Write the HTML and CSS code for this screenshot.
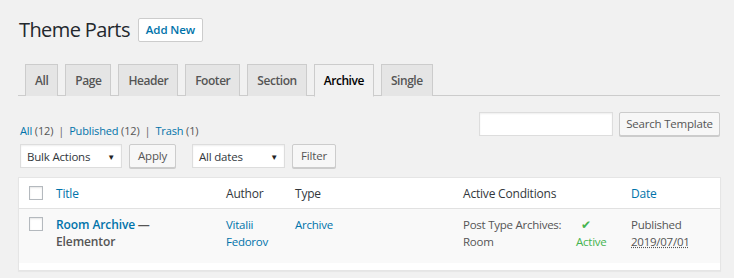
FILE: index.html
```html
<!DOCTYPE html>
<html>
<head>
<meta charset="utf-8">
<link rel="stylesheet" href="styles.css">
</head>
<body>
<div class="wrap">
  <div class="heading">
    <h1 class="title">Theme Parts</h1>
    <a class="add-new">Add New</a>
  </div>
  <nav class="tabs">
    <a class="tab">All</a>
    <a class="tab">Page</a>
    <a class="tab">Header</a>
    <a class="tab">Footer</a>
    <a class="tab">Section</a>
    <a class="tab active">Archive</a>
    <a class="tab">Single</a>
  </nav>
  <div class="filters">
    <div class="left">
      <ul class="subsub">
        <li><a>All <span class="count">(12)</span></a></li>
        <li class="sep">|</li>
        <li><a>Published <span class="count">(12)</span></a></li>
        <li class="sep">|</li>
        <li><a>Trash <span class="count">(1)</span></a></li>
      </ul>
      <div class="actions">
        <div class="select bulk">Bulk Actions<span class="arrow">▼</span></div>
        <button class="btn apply">Apply</button>
        <div class="select dates">All dates<span class="arrow">▼</span></div>
        <button class="btn filter">Filter</button>
      </div>
    </div>
    <div class="search">
      <div class="search-input"></div>
      <button class="btn search-btn">Search Template</button>
    </div>
  </div>
  <div class="table">
    <div class="row head">
      <div class="c-cb"><span class="cb"></span></div>
      <div class="c-title"><a>Title</a></div>
      <div class="c-author">Author</div>
      <div class="c-type">Type</div>
      <div class="c-cond">Active Conditions</div>
      <div class="c-active"></div>
      <div class="c-date"><a>Date</a></div>
    </div>
    <div class="row body">
      <div class="c-cb"><span class="cb"></span></div>
      <div class="c-title"><a class="strong">Room Archive</a> <strong class="dash">—<br>Elementor</strong></div>
      <div class="c-author"><a>Vitalii<br>Fedorov</a></div>
      <div class="c-type"><a>Archive</a></div>
      <div class="c-cond">Post Type Archives:<br>Room</div>
      <div class="c-active"><span class="check">✔</span><span class="active-label">Active</span></div>
      <div class="c-date">Published<br><abbr>2019/07/01</abbr></div>
    </div>
  </div>
</div>
</body>
</html>
```
FILE: styles.css
```css
* { box-sizing: border-box; }
html, body { margin: 0; padding: 0; }
body {
  background: #f1f1f1;
  font-family: "Open Sans", "Noto Sans", sans-serif;
  font-size: 12px;
  color: #444;
  width: 734px;
  height: 278px;
  overflow: hidden;
}
a { color: #0073aa; text-decoration: none; }
.wrap { padding: 16px 14px 0 18px; }
.heading { display: flex; align-items: center; gap: 8px; height: 27px; }
.title { margin: 0; font-size: 20px; font-weight: 400; color: #23282d; line-height: 27px; padding-left: 1px; letter-spacing: -0.6px; }
.add-new {
  border: 1px solid #ccc; border-radius: 2px;
  height: 24px; padding: 0 7px; line-height: 22px; font-size: 11.5px; font-weight: 600;
  background: #fff; letter-spacing: -0.1px;
}
.tabs {
  margin-top: 21px; display: flex; gap: 7px; padding-left: 7px;
  border-bottom: 1px solid #ccc; height: 32px;
}
.tab {
  height: 32px; border: 1px solid #ccc; border-bottom: none; background: #e5e5e5;
  color: #555; font-weight: 600; font-size: 12px; letter-spacing: -0.45px; padding: 0 9px; line-height: 31px;
}
.tab.active { background: #f1f1f1; color: #000; height: 33px; border-bottom: 1px solid #f1f1f1; }
.filters { display: flex; justify-content: space-between; margin-top: 16px; }
.left { display: flex; flex-direction: column; }
.subsub { list-style: none; margin: 12px 0 0 2px; padding: 0; display: flex; gap: 5px; font-size: 11px; color: #666; line-height: 14px; letter-spacing: -0.15px; }
.subsub .count { color: #555; }
.subsub .sep { color: #666; }
.actions { display: flex; align-items: center; margin-top: 6px; }
.select {
  background: #fff; border: 1px solid #ddd; height: 24px; display: flex; align-items: center;
  justify-content: space-between; padding: 0 6px 0 6px; color: #32373c; font-size: 11.5px; letter-spacing: -0.2px;
  box-shadow: inset 0 1px 2px rgba(0,0,0,.07);
}
.select .arrow { font-size: 8px; color: #222; }
.bulk { width: 102px; margin-left: 2px; }
.dates { width: 93px; margin-left: 16px; }
.btn {
  font-family: inherit; font-size: 11.5px; color: #555; background: #f7f7f7; letter-spacing: -0.2px;
  border: 1px solid #ccc; border-radius: 2px; box-shadow: 0 1px 0 #ccc;
  height: 24px; padding: 0 7px; margin-left: 7px; line-height: 22px;
}
.apply { width: 47px; padding: 0; }
.filter { width: 44px; padding: 0; }
.search { display: flex; align-items: flex-start; gap: 6px; }
.search-input { width: 134px; height: 24px; background: #fff; border: 1px solid #ddd; box-shadow: inset 0 1px 2px rgba(0,0,0,.07); }
.search-btn { margin-left: 0; width: 101px; padding: 0; }
.table {
  margin-top: 9px; background: #fff; border: 1px solid #e5e5e5; box-shadow: 0 1px 1px rgba(0,0,0,.04);
  width: 703px; padding-bottom: 7px;
}
.row { display: flex; }
.row.head { height: 31px; align-items: center; border-bottom: 1px solid #e1e1e1; color: #32373c; font-size: 12px; letter-spacing: -0.2px; }
.row.body { background: #f9f9f9; padding: 7px 0 0; height: 54px; line-height: 17px; color: #555; font-size: 11.5px; letter-spacing: -0.25px; }
.c-cb { width: 37px; padding-left: 10px; }
.row.body .c-cb { padding-top: 1px; }
.cb { display: block; width: 14px; height: 14px; border: 1px solid #b4b9be; background: #fff; box-shadow: inset 0 1px 2px rgba(0,0,0,.1); }
.c-title { width: 170px; }
.strong { font-weight: 600; font-size: 12px; letter-spacing: -0.1px; }
.dash { font-weight: 600; color: #555; font-size: 12px; letter-spacing: -0.1px; }
.c-author { width: 69px; }
.c-type { width: 168px; }
.c-cond { width: 113px; }
.c-active { width: 55px; display: flex; flex-direction: column; align-items: flex-start; }
.check { color: #46b450; font-size: 12px; line-height: 17px; padding-left: 5px; }
.active-label { color: #46b450; }
.c-date { flex: 1; }
abbr { text-decoration: underline dotted; }
```
